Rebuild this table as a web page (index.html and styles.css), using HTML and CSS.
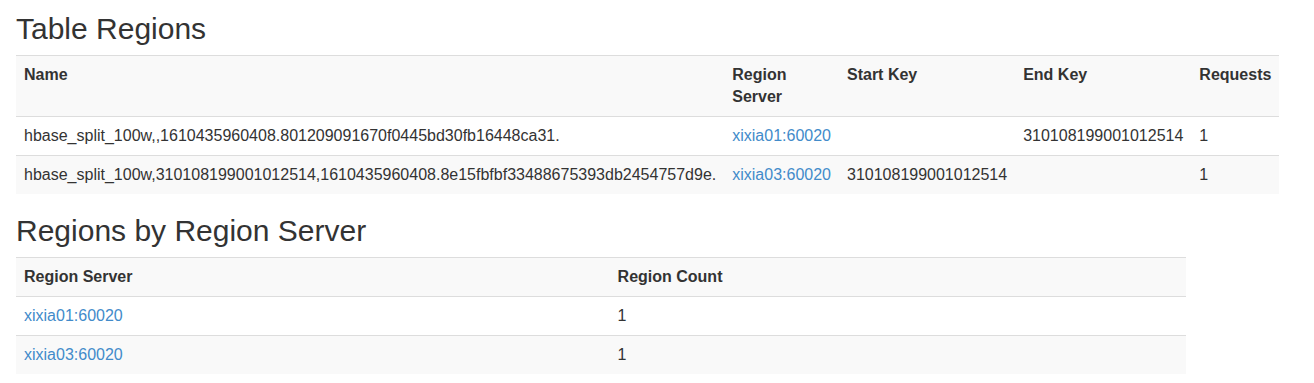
FILE: index.html
```html
<!DOCTYPE html>
<html>
<head>
<meta charset="utf-8">
<title>Table Regions</title>
<link rel="stylesheet" href="styles.css">
</head>
<body>
<div class="page">
  <h2 class="section-title">Table Regions</h2>
  <table class="data-table">
    <tr>
      <th>Name</th>
      <th>Region Server</th>
      <th>Start Key</th>
      <th>End Key</th>
      <th>Requests</th>
    </tr>
    <tr>
      <td>hbase_split_100w,,1610435960408.801209091670f0445bd30fb16448ca31.</td>
      <td><a class="link" href="#">xixia01:60020</a></td>
      <td></td>
      <td>310108199001012514</td>
      <td>1</td>
    </tr>
    <tr>
      <td>hbase_split_100w,310108199001012514,1610435960408.8e15fbfbf33488675393db2454757d9e.</td>
      <td><a class="link" href="#">xixia03:60020</a></td>
      <td>310108199001012514</td>
      <td></td>
      <td>1</td>
    </tr>
  </table>

  <h2 class="section-title">Regions by Region Server</h2>
  <table class="data-table">
    <tr>
      <th>Region Server</th>
      <th>Region Count</th>
    </tr>
    <tr>
      <td><a class="link" href="#">xixia01:60020</a></td>
      <td>1</td>
    </tr>
    <tr>
      <td><a class="link" href="#">xixia03:60020</a></td>
      <td>1</td>
    </tr>
  </table>
</div>
</body>
</html>
```

FILE: styles.css
```css
html, body {
  margin: 0;
  padding: 0;
  background: #ffffff;
}

body {
  font-family: "Liberation Sans", Arial, Helvetica, sans-serif;
  font-size: 16px;
  line-height: 22px;
  color: #333333;
}

.page {
  width: 1170px;
  margin-left: 16px;
}

.section-title {
  font-family: "Liberation Sans", Arial, Helvetica, sans-serif;
  font-size: 30px;
  font-weight: 500;
  line-height: 33px;
  color: #333333;
  margin: 20px 0 10px 0;
}

.section-title:first-child {
  margin-top: 12px;
}

.data-table {
  width: 100%;
  border-collapse: collapse;
  border-spacing: 0;
  margin-bottom: 20px;
}

.data-table th,
.data-table td {
  padding: 8px;
  line-height: 22px;
  text-align: left;
  vertical-align: top;
  border-top: 1px solid #dddddd;
}

.data-table th {
  font-weight: bold;
}

.data-table tr:nth-of-type(odd) {
  background: #f9f9f9;
}

.link {
  color: #428bca;
  text-decoration: none;
}
```
